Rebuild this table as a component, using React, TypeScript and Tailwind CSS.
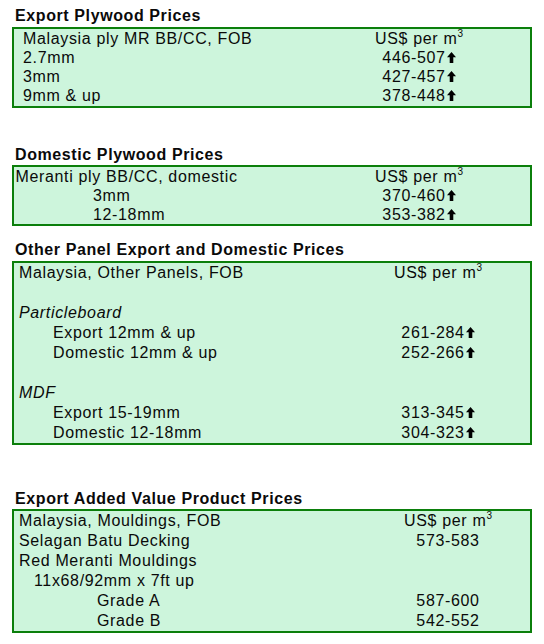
import React from "react";

const Up = () => (
  <svg
    width="9"
    height="11"
    viewBox="0 0 9 11"
    className="inline-block ml-[1px] align-baseline"
  >
    <path d="M4.5 0 L9 5.2 L6.3 5.2 L6.3 11 L2.7 11 L2.7 5.2 L0 5.2 Z" fill="#000" />
  </svg>
);

const Per = () => (
  <span>
    US$ per m
    <span className="relative top-[-7px] text-[10px] tracking-normal">3</span>
  </span>
);

type Row = { l?: React.ReactNode; v?: React.ReactNode; pl: string; up?: boolean; it?: boolean };

function Box({
  rows,
  rowH,
  colMr,
}: {
  rows: Row[];
  rowH: string;
  colMr: string;
}) {
  return (
    <div className="border-2 border-[#0b7f0b] bg-[#cdf5dc]">
      {rows.map((r, i) => (
        <div key={i} className={`flex ${rowH}`}>
          <div className={`flex-1 whitespace-nowrap ${r.pl} ${r.it ? "italic" : ""}`}>{r.l}</div>
          <div className={`w-[130px] text-center whitespace-nowrap ${colMr}`}>
            {r.v}
            {r.up ? <Up /> : null}
          </div>
        </div>
      ))}
    </div>
  );
}

const Title = ({ children, mt }: { children: React.ReactNode; mt: string }) => (
  <div className={`h-[18.5px] leading-[16px] text-[16px] font-bold tracking-[0.6px] pl-[3px] ${mt}`}>
    {children}
  </div>
);

export default function App() {
  return (
    <div
      className="w-[544px] h-[644px] bg-white px-[12px] pt-[8px] text-[16px] tracking-[0.65px] text-[#0a0a0a]"
      style={{ fontFamily: '"Liberation Sans", Arial, sans-serif' }}
    >
      <Title mt="">Export Plywood Prices</Title>
      <Box
        rowH="h-[19.25px] leading-[19.25px]"
        colMr="mr-[46px]"
        rows={[
          { l: "Malaysia ply MR BB/CC, FOB", v: <Per />, pl: "pl-[9px]" },
          { l: "2.7mm", v: "446-507", pl: "pl-[9px]", up: true },
          { l: "3mm", v: "427-457", pl: "pl-[9px]", up: true },
          { l: "9mm & up", v: "378-448", pl: "pl-[9px]", up: true },
        ]}
      />

      <Title mt="mt-[39px]">Domestic Plywood Prices</Title>
      <Box
        rowH="h-[19px] leading-[19px]"
        colMr="mr-[46px]"
        rows={[
          { l: "Meranti ply BB/CC, domestic", v: <Per />, pl: "pl-[1.5px]" },
          { l: "3mm", v: "370-460", pl: "pl-[79px]", up: true },
          { l: "12-18mm", v: "353-382", pl: "pl-[79px]", up: true },
        ]}
      />

      <Title mt="mt-[16px]">Other Panel Export and Domestic Prices</Title>
      <Box
        rowH="h-[20px] leading-[20px]"
        colMr="mr-[27px]"
        rows={[
          { l: "Malaysia, Other Panels, FOB", v: <Per />, pl: "pl-[5px]" },
          { l: "", pl: "pl-[5px]" },
          { l: "Particleboard", pl: "pl-[5px]", it: true },
          { l: "Export 12mm & up", v: "261-284", pl: "pl-[39px]", up: true },
          { l: "Domestic 12mm & up", v: "252-266", pl: "pl-[39px]", up: true },
          { l: "", pl: "pl-[5px]" },
          { l: "MDF", pl: "pl-[5px]", it: true },
          { l: "Export 15-19mm", v: "313-345", pl: "pl-[39px]", up: true },
          { l: "Domestic 12-18mm", v: "304-323", pl: "pl-[39px]", up: true },
        ]}
      />

      <Title mt="mt-[46px]">Export Added Value Product Prices</Title>
      <Box
        rowH="h-[20px] leading-[20px]"
        colMr="mr-[17px]"
        rows={[
          { l: "Malaysia, Mouldings, FOB", v: <Per />, pl: "pl-[5px]" },
          { l: "Selagan Batu Decking", v: "573-583", pl: "pl-[5px]" },
          { l: "Red Meranti Mouldings", pl: "pl-[5px]" },
          { l: "11x68/92mm x 7ft up", pl: "pl-[20px]" },
          { l: "Grade A", v: "587-600", pl: "pl-[83px]" },
          { l: "Grade B", v: "542-552", pl: "pl-[83px]" },
        ]}
      />
    </div>
  );
}
